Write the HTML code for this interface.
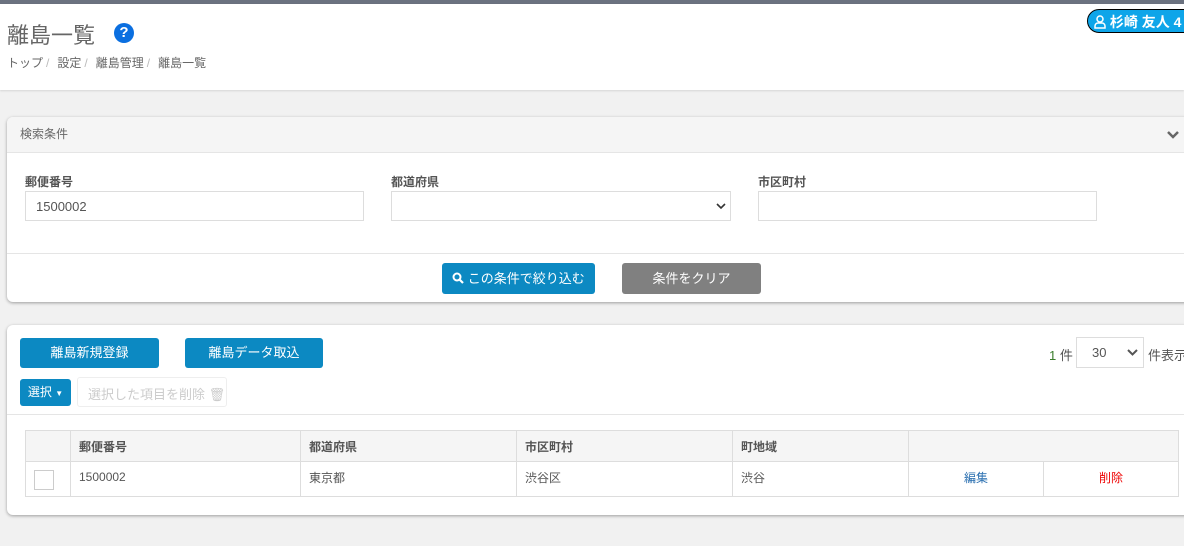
<!DOCTYPE html>
<html><head><meta charset="utf-8"><style>
*{box-sizing:border-box;margin:0;padding:0}
body{width:1184px;height:546px;overflow:hidden;background:#f1f1f1;font-family:"Liberation Sans","Noto Sans CJK JP",sans-serif;color:#555;position:relative}
.abs{position:absolute}
.top{left:0;top:0;width:1184px;height:4px;background:#6b7280}
.hdr{left:0;top:4px;width:1184px;height:86px;background:#fff;box-shadow:0 1px 2px rgba(0,0,0,.12)}
.card{background:#fff;border-radius:6px;box-shadow:0 1px 3px rgba(0,0,0,.35)}
.btn{position:absolute;color:#fff;font-size:13px;text-align:center;border-radius:3px}
.inp{position:absolute;height:30px;border:1px solid #ddd;background:#fff;font-size:13px;padding:7px 10px;color:#555}
.lbl{position:absolute;font-size:12px;font-weight:bold;color:#555}
table{border-collapse:collapse;font-size:12px}
td,th{border:1px solid #ddd;text-align:left;padding:0 8px;color:#555}
th{background:#f5f5f5;height:31px}
td{height:35px;padding-bottom:4px}
.sep{color:#bbb;margin:0 8px 0 3px}
</style></head><body>
<div class="abs top"></div>
<div class="abs hdr">
 <div class="abs" style="left:7px;top:14px;font-size:22px;color:#666">離島一覧</div>
 <div class="abs" style="left:114px;top:19px;width:20px;height:20px;border-radius:50%;background:#0b6fe0;color:#fff;font-weight:bold;font-size:15px;text-align:center;line-height:20px">?</div>
 <div class="abs" style="left:7px;top:50px;font-size:12px;color:#666">トップ<span class="sep">/</span>設定<span class="sep">/</span>離島管理<span class="sep">/</span>離島一覧</div>
 <div class="abs" style="left:1087px;top:5px;width:110px;height:24px;border-radius:12px;background:#0ea5e9;border:1px solid #000;color:#fff;font-size:14px;font-weight:bold;padding:2px 0 0 6px;white-space:nowrap">
  <svg width="12" height="14" viewBox="0 0 12 14" style="vertical-align:-2px"><circle cx="6" cy="4" r="3" fill="none" stroke="#fff" stroke-width="1.5"/><path d="M1 13v-2a3 3 0 0 1 3-3h4a3 3 0 0 1 3 3v2z" fill="none" stroke="#fff" stroke-width="1.5"/></svg> 杉崎 友人 4</div>
</div>

<div class="abs card" style="left:7px;top:117px;width:1190px;height:185px">
 <div class="abs" style="left:0;top:0;width:100%;height:36px;background:#f5f5f5;border-bottom:1px solid #e5e5e5;border-radius:6px 6px 0 0"></div>
 <div class="abs" style="left:13px;top:8px;font-size:12px;color:#666">検索条件</div>
 <svg class="abs" style="left:1159px;top:13px" width="14" height="10" viewBox="0 0 14 10"><path d="M2 2l5 5 5-5" fill="none" stroke="#666" stroke-width="2.5"/></svg>
 <div class="lbl" style="left:18px;top:56px">郵便番号</div>
 <div class="inp" style="left:18px;top:74px;width:339px">1500002</div>
 <div class="lbl" style="left:384px;top:56px">都道府県</div>
 <div class="inp" style="left:384px;top:74px;width:340px"></div>
 <svg class="abs" style="left:709px;top:86px" width="10" height="7" viewBox="0 0 10 7"><path d="M1 1l4 4 4-4" fill="none" stroke="#333" stroke-width="1.6"/></svg>
 <div class="lbl" style="left:751px;top:56px">市区町村</div>
 <div class="inp" style="left:751px;top:74px;width:339px"></div>
 <div class="abs" style="left:0;top:136px;width:100%;border-top:1px solid #e5e5e5"></div>
 <div class="btn" style="left:435px;top:146px;width:153px;height:31px;line-height:31px;background:#0c89c2">
  <svg width="12" height="12" viewBox="0 0 12 12" style="vertical-align:-1px"><circle cx="5" cy="5" r="3.5" fill="none" stroke="#fff" stroke-width="2"/><path d="M7.5 7.5L11 11" stroke="#fff" stroke-width="2.2"/></svg> この条件で絞り込む</div>
 <div class="btn" style="left:615px;top:146px;width:139px;height:31px;line-height:31px;background:#808080">条件をクリア</div>
</div>

<div class="abs card" style="left:7px;top:325px;width:1190px;height:190px">
 <div class="btn" style="left:13px;top:13px;width:139px;height:30px;line-height:30px;background:#0c89c2">離島新規登録</div>
 <div class="btn" style="left:178px;top:13px;width:138px;height:30px;line-height:30px;background:#0c89c2">離島データ取込</div>
 <div class="abs" style="left:1042px;top:20px;font-size:13px;color:#555"><span style="color:#3a7d2c">1</span> 件</div>
 <div class="abs" style="left:1069px;top:12px;width:68px;height:31px;border:1px solid #ddd;font-size:13px;padding:7px 0 0 15px">30</div>
 <svg class="abs" style="left:1120px;top:24px" width="11" height="8" viewBox="0 0 11 8"><path d="M1 1l4.5 4.5L10 1" fill="none" stroke="#555" stroke-width="2"/></svg>
 <div class="abs" style="left:1141px;top:20px;font-size:13px">件表示</div>
 <div class="btn" style="left:13px;top:54px;width:51px;height:27px;line-height:27px;font-size:12px;background:#0c89c2">選択 <span style="font-size:8px">▼</span></div>
 <div class="abs" style="left:70px;top:52px;width:150px;height:30px;border:1px solid #eee;border-radius:3px;font-size:13px;color:#ccc;padding:6px 0 0 10px">選択した項目を削除 🗑</div>
 <div class="abs" style="left:0;top:89px;width:100%;border-top:1px solid #e5e5e5"></div>
 <table class="abs" style="left:18px;top:105px;width:1154px">
  <tr><th style="width:45px"></th><th style="width:230px">郵便番号</th><th style="width:216px">都道府県</th><th style="width:216px">市区町村</th><th style="width:176px">町地域</th><th colspan="2"></th></tr>
  <tr><td><div style="width:20px;height:20px;border:1px solid #ccc;margin-top:6px"></div></td><td>1500002</td><td>東京都</td><td>渋谷区</td><td>渋谷</td><td style="text-align:center;color:#2a6fb0">編集</td><td style="text-align:center;color:#e00">削除</td></tr>
 </table>
</div>
</body></html>
